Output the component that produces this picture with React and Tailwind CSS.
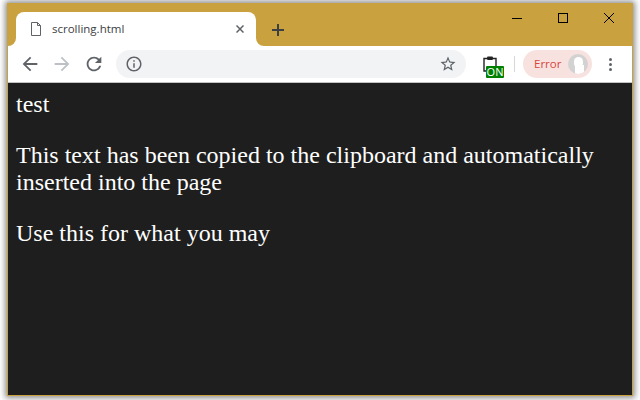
function Glyph({ d, size, color, className = "" }) {
  return (
    <svg viewBox="0 0 24 24" width={size} height={size} fill={color} className={`shrink-0 ${className}`}>
      <path d={d} />
    </svg>
  );
}

const arrowBack = "M20 11H7.83l5.59-5.59L12 4l-8 8 8 8 1.41-1.41L7.83 13H20v-2z";
const arrowForward = "M4 11h12.17l-5.59-5.59L12 4l8 8-8 8-1.41-1.41L16.17 13H4v-2z";
const reload = "M17.65 6.35C16.2 4.9 14.21 4 12 4c-4.42 0-7.99 3.58-7.99 8s3.57 8 7.99 8c3.73 0 6.84-2.55 7.73-6h-2.08c-.82 2.33-3.04 4-5.65 4-3.31 0-6-2.69-6-6s2.69-6 6-6c1.66 0 3.14.69 4.22 1.78L13 11h7V4l-2.35 2.35z";
const info = "M11 7h2v2h-2zm0 4h2v6h-2zm1-9C6.48 2 2 6.48 2 12s4.48 10 10 10 10-4.48 10-10S17.52 2 12 2zm0 18c-4.41 0-8-3.59-8-8s3.59-8 8-8 8 3.59 8 8-3.59 8-8 8z";
const star = "M22 9.24l-7.19-.62L12 2 9.19 8.63 2 9.24l5.46 4.73L5.82 21 12 17.27 18.18 21l-1.63-7.03L22 9.24zM12 15.4l-3.76 2.27 1-4.28-3.32-2.88 4.38-.38L12 6.1l1.71 4.04 4.38.38-3.32 2.88 1 4.28L12 15.4z";

function Toolbar() {
  return (
    <div className="h-[36px] bg-white flex items-center border-b border-[#c4c4c4] box-content">
      <Glyph d={arrowBack} size={22} color="#5f6368" className="ml-[11px]" />
      <Glyph d={arrowForward} size={22} color="#bdc1c6" className="ml-[10px]" />
      <Glyph d={reload} size={22} color="#5f6368" className="ml-[10px]" />
      <div className="ml-[11px] w-[350px] h-[28px] rounded-full bg-[#f1f3f4] flex items-center justify-between px-[9px]">
        <Glyph d={info} size={18} color="#5f6368" />
        <Glyph d={star} size={18} color="#5f6368" />
      </div>
      <div className="relative ml-[17px] w-[21px] h-[24px]">
        <svg viewBox="0 0 14 16" className="absolute left-0 top-[4px] w-[14px] h-[16px]">
          <path d="M4 2.5H1v12.5h12V2.5H10" fill="none" stroke="#222" strokeWidth="1.4" />
          <rect x="4" y="0.5" width="6" height="3.5" rx="1" fill="#222" />
        </svg>
        <span className="absolute left-[3px] top-[14px] w-[18px] h-[12px] rounded-[1px] bg-[#008000] text-white text-[11px] leading-[12px] text-center font-['Open_Sans',sans-serif]">ON</span>
      </div>
      <div className="ml-[10px] w-px h-[16px] bg-[#d5d7da]" />
      <div className="ml-[8px] w-[69px] h-[28px] rounded-full bg-[#f8e2e0] flex items-center pl-[11px]">
        <span className="text-[11.5px] text-[#d9453b] font-['Open_Sans',sans-serif]">Error</span>
        <div className="relative ml-auto mr-[4px] w-[20px] h-[20px] rounded-full bg-[#d2d2d2] overflow-hidden">
          <div className="absolute left-[6px] top-[3px] w-[9px] h-[11px] rounded-full bg-white" />
          <div className="absolute left-[7px] top-[11px] w-[9px] h-[9px] bg-white" />
        </div>
      </div>
      <div className="ml-[17px] flex flex-col gap-[2px]">
        <span className="w-[3px] h-[3px] rounded-full bg-[#5f6368]" />
        <span className="w-[3px] h-[3px] rounded-full bg-[#5f6368]" />
        <span className="w-[3px] h-[3px] rounded-full bg-[#5f6368]" />
      </div>
    </div>
  );
}

function Tab() {
  return (
    <div className="relative mt-[9px] w-[240px] h-[34px] bg-white rounded-t-[8px] flex items-center pl-[15px] pr-[12px]">
      <div className="absolute -left-[8px] bottom-0 w-[8px] h-[8px] bg-white">
        <div className="w-full h-full bg-[#c9a13f] rounded-br-[8px]" />
      </div>
      <div className="absolute -right-[8px] bottom-0 w-[8px] h-[8px] bg-white">
        <div className="w-full h-full bg-[#c9a13f] rounded-bl-[8px]" />
      </div>
      <svg viewBox="0 0 10 14" className="w-[10px] h-[14px] shrink-0">
        <path d="M0.5 0.5H6.5L9.5 3.5V13.5H0.5ZM6.5 0.5V3.5H9.5" fill="none" stroke="#5f6368" strokeWidth="1" />
      </svg>
      <span className="ml-[11px] text-[11.5px] text-[#3c4043] font-['Open_Sans',sans-serif]">scrolling.html</span>
      <svg viewBox="0 0 8 8" className="ml-auto w-[8px] h-[8px]">
        <path d="M0.5 0.5L7.5 7.5M7.5 0.5L0.5 7.5" stroke="#5f6368" strokeWidth="1.5" />
      </svg>
    </div>
  );
}

export default function App() {
  return (
    <div className="w-[640px] h-[400px] bg-white px-[7px] pt-[3px] pb-[4px] overflow-hidden">
      <div className="h-full flex flex-col border border-[#c9a13f] border-t-0 shadow-[0_0_6px_2px_rgba(0,0,0,0.45)]">
        <div className="h-[43px] bg-[#c9a13f] flex pl-[8px] relative shrink-0">
          <Tab />
          <svg viewBox="0 0 12 12" className="ml-[16px] mt-[21px] w-[12px] h-[12px]">
            <path d="M6 0V12M0 6H12" stroke="#3c4043" strokeWidth="2" />
          </svg>
          <div className="absolute right-[18px] top-[10px] flex items-center gap-[36px]">
            <svg viewBox="0 0 10 10" className="w-[10px] h-[10px]">
              <path d="M0 5.5H10" stroke="#000" strokeWidth="1" />
            </svg>
            <svg viewBox="0 0 10 10" className="w-[10px] h-[10px]">
              <rect x="0.5" y="0.5" width="9" height="9" fill="none" stroke="#000" strokeWidth="1" />
            </svg>
            <svg viewBox="0 0 10 10" className="w-[10px] h-[10px]">
              <path d="M0 0L10 10M10 0L0 10" stroke="#000" strokeWidth="1" />
            </svg>
          </div>
        </div>
        <Toolbar />
        <div className="flex-1 bg-[#1e1e1e] text-white p-[8px] font-['Liberation_Serif',serif] text-[24px] leading-[27px]">
          <p>test</p>
          <p className="mt-[24px]">This text has been copied to the clipboard and automatically inserted into the page</p>
          <p className="mt-[24px]">Use this for what you may</p>
        </div>
      </div>
    </div>
  );
}
